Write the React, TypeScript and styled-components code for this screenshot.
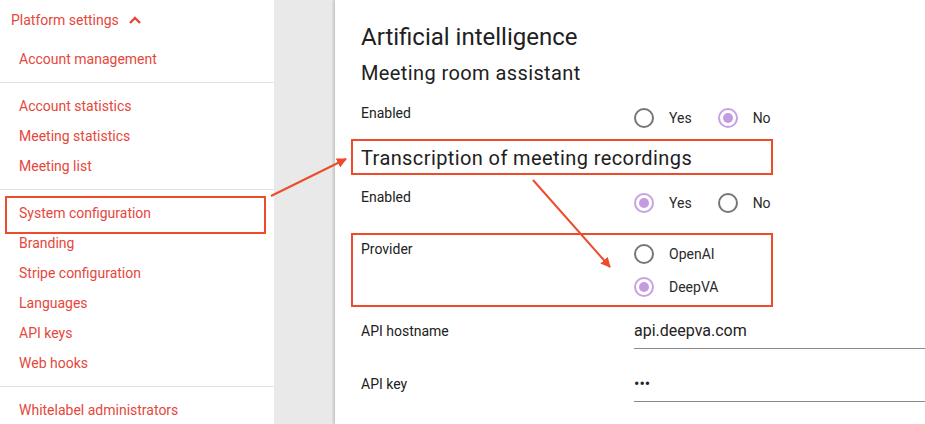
import React from "react";
import styled, { createGlobalStyle } from "styled-components";

const Global = createGlobalStyle`
  html, body { margin: 0; padding: 0; background: #fff; }
  body { font-family: Roboto, "Noto Sans", Arial, sans-serif; -webkit-font-smoothing: antialiased; }
  * { box-sizing: border-box; }
`;

const RED = "#e5473c";
const MARK = "#ee4b2b";

const Page = styled.div`
  position: relative;
  width: 925px;
  height: 424px;
  overflow: hidden;
  display: flex;
  background: #e9e9e9;
`;

const Sidebar = styled.nav`
  width: 274px;
  flex: none;
  background: #fff;
  display: flex;
  flex-direction: column;
  & > * { flex-shrink: 0; }
`;

const SideHeader = styled.div`
  height: 40px;
  display: flex;
  align-items: center;
  gap: 10px;
  padding-left: 11px;
  color: ${RED};
  font-size: 14px;
`;

const Group = styled.div<{ $top?: number }>`
  padding: ${(p) => p.$top ?? 8}px 0 8px;
  border-bottom: 1px solid #e2e2e2;
  &:last-child { border-bottom: none; }
`;

const NavItem = styled.div`
  height: 30px;
  line-height: 30px;
  padding-left: 19px;
  color: ${RED};
  font-size: 14px;
`;

const Gutter = styled.div`
  width: 61px;
  flex: none;
  background: #e9e9e9;
`;

const Panel = styled.main`
  flex: 1;
  background: #fff;
  box-shadow: -2px 0 2px rgba(0, 0, 0, 0.15);
  padding: 21px 0 0 26px;
  display: flex;
  flex-direction: column;
  color: #212121;
`;

const Title = styled.h1`
  margin: 0;
  font-size: 24px;
  line-height: 32px;
  font-weight: 400;
`;

const Subtitle = styled.h2<{ $mt: number }>`
  margin: ${(p) => p.$mt}px 0 0;
  font-size: 20px;
  line-height: 28px;
  font-weight: 400;
  letter-spacing: 0.4px;
`;

const Row = styled.div<{ $mt: number }>`
  margin-top: ${(p) => p.$mt}px;
  display: flex;
  align-items: flex-start;
`;

const Label = styled.div`
  width: 273px;
  flex: none;
  font-size: 14px;
  line-height: 24px;
  color: #212121;
`;

const RadioGroup = styled.div<{ $column?: boolean }>`
  display: flex;
  flex-direction: ${(p) => (p.$column ? "column" : "row")};
  gap: ${(p) => (p.$column ? 0 : 26)}px;
`;

const RadioItem = styled.label<{ $h?: number }>`
  height: ${(p) => p.$h ?? 34}px;
  display: flex;
  align-items: center;
  gap: 15px;
  font-size: 14px;
  color: #2a2a2a;
`;

const Circle = styled.span<{ $on?: boolean }>`
  width: 20px;
  height: 20px;
  border-radius: 50%;
  border: 2px solid ${(p) => (p.$on ? "#c7a1e3" : "#767676")};
  display: flex;
  align-items: center;
  justify-content: center;
  &::after {
    content: "";
    width: 10px;
    height: 10px;
    border-radius: 50%;
    background: ${(p) => (p.$on ? "#c39be0" : "transparent")};
  }
`;

const Field = styled.div`
  flex: 1;
  border-bottom: 1px solid #8a8a8a;
  font-size: 16px;
  line-height: 24px;
  padding-bottom: 5px;
  color: #222;
`;

const Overlay = styled.svg`
  position: absolute;
  left: 0;
  top: 0;
  pointer-events: none;
`;

const Radio = ({ label, on, h }: { label: string; on?: boolean; h?: number }) => (
  <RadioItem $h={h}>
    <Circle $on={on} />
    {label}
  </RadioItem>
);

const Chevron = () => (
  <svg width="12" height="8" viewBox="0 0 12 8">
    <polyline points="1,7 6,2 11,7" fill="none" stroke={RED} strokeWidth="2.4" />
  </svg>
);

export default function App() {
  return (
    <>
      <Global />
      <Page>
        <Sidebar>
          <SideHeader>
            Platform settings <Chevron />
          </SideHeader>
          <Group $top={4}>
            <NavItem>Account management</NavItem>
          </Group>
          <Group>
            <NavItem>Account statistics</NavItem>
            <NavItem>Meeting statistics</NavItem>
            <NavItem>Meeting list</NavItem>
          </Group>
          <Group>
            <NavItem>System configuration</NavItem>
            <NavItem>Branding</NavItem>
            <NavItem>Stripe configuration</NavItem>
            <NavItem>Languages</NavItem>
            <NavItem>API keys</NavItem>
            <NavItem>Web hooks</NavItem>
          </Group>
          <Group>
            <NavItem>Whitelabel administrators</NavItem>
          </Group>
        </Sidebar>
        <Gutter />
        <Panel>
          <Title>Artificial intelligence</Title>
          <Subtitle $mt={6}>Meeting room assistant</Subtitle>
          <Row $mt={14}>
            <Label>Enabled</Label>
            <RadioGroup>
              <Radio label="Yes" />
              <Radio label="No" on />
            </RadioGroup>
          </Row>
          <Subtitle $mt={9}>Transcription of meeting recordings</Subtitle>
          <Row $mt={13}>
            <Label>Enabled</Label>
            <RadioGroup>
              <Radio label="Yes" on h={36} />
              <Radio label="No" h={36} />
            </RadioGroup>
          </Row>
          <Row $mt={16}>
            <Label>Provider</Label>
            <RadioGroup $column>
              <Radio label="OpenAI" />
              <Radio label="DeepVA" on h={32} />
            </RadioGroup>
          </Row>
          <Row $mt={16}>
            <Label>API hostname</Label>
            <Field>api.deepva.com</Field>
          </Row>
          <Row $mt={23}>
            <Label>API key</Label>
            <Field>•••</Field>
          </Row>
        </Panel>
        <Overlay width="925" height="424" viewBox="0 0 925 424">
          <defs>
            <marker id="head" markerWidth="10" markerHeight="10" refX="9" refY="5" orient="auto" markerUnits="userSpaceOnUse">
              <path d="M0,0 L10,5 L0,10 Z" fill={MARK} />
            </marker>
          </defs>
          <g fill="none" stroke={MARK} strokeWidth="2">
            <rect x="6" y="197" width="259" height="36" />
            <rect x="352" y="140" width="420" height="34" />
            <rect x="352" y="234" width="420" height="72" />
          </g>
          <line x1="271" y1="196" x2="346" y2="159" stroke={MARK} strokeWidth="2" markerEnd="url(#head)" />
          <line x1="533" y1="180" x2="610" y2="267" stroke={MARK} strokeWidth="2" markerEnd="url(#head)" />
        </Overlay>
      </Page>
    </>
  );
}
